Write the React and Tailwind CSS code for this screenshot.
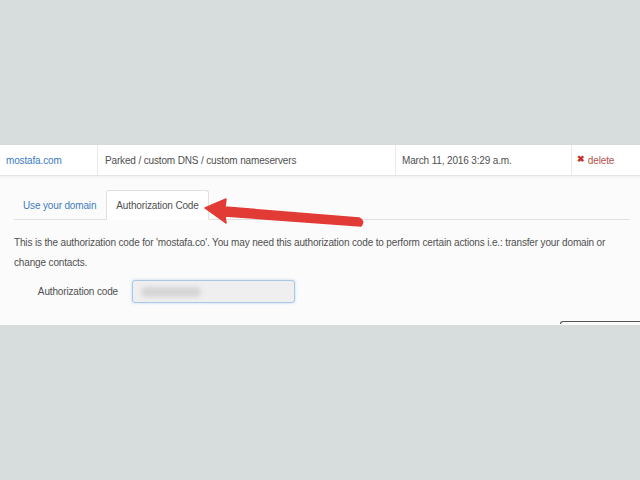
export default function App() {
    return (
        <div className="w-[640px] h-[480px] bg-[#d7dddd] relative overflow-hidden tracking-[-0.15px]" style={{ fontFamily: '"Liberation Sans", Arial, sans-serif' }}>
            <div className="h-[145px]" />

            {/* Domain panel */}
            <div className="h-[180px] bg-[#fbfbfb] relative">
                {/* Domain row */}
                <div className="h-[31px] flex bg-white border-b border-[#e4e6e6] shadow-[0_1px_3px_rgba(0,0,0,0.06)] text-[10px] text-[#505050]">
                    <div className="w-[98px] flex items-center pl-[6px] text-[#3c7bbf] border-r border-[#e8eaea]">mostafa.com</div>
                    <div className="w-[298px] flex items-center pl-[7px] border-r border-[#e8eaea]">Parked / custom DNS / custom nameservers</div>
                    <div className="w-[176px] flex items-center pl-[6px] border-r border-[#e8eaea]">March 11, 2016 3:29 a.m.</div>
                    <div className="flex-1 flex items-center pl-[5px] text-[#b4524c]">
                        <span className="text-[#c8302a] font-bold text-[9px] mr-[3px]">✖</span>delete
                    </div>
                </div>

                {/* Tabs */}
                <div className="mt-[15px] ml-[14px] mr-[10px] h-[29px] flex items-end border-b border-[#dfe1e1] text-[10px]">
                    <div className="h-full flex items-center pl-[9px] pr-[10px] text-[#3c7bbf]">Use your domain</div>
                    <div className="h-[30px] -mb-px flex items-center px-[9px] bg-white border border-[#dfe1e1] border-b-white rounded-t-[3px] text-[#505050]">Authorization Code</div>
                </div>

                {/* Description */}
                <p className="mt-[13px] ml-[14px] mr-[20px] text-[10px] leading-[20px] text-[#505050]">
                    This is the authorization code for 'mostafa.co'. You may need this authorization code to perform certain actions i.e.: transfer your domain or change contacts.
                </p>

                {/* Form row */}
                <div className="mt-[7px] flex items-center">
                    <label className="w-[118px] text-right text-[10px] text-[#505050]">Authorization code</label>
                    <div className="ml-[14px] w-[163px] h-[23px] rounded-[3px] border border-[#a9c8e6] bg-[#efefef] shadow-[0_0_3px_rgba(102,160,220,0.4)] flex items-center pl-[8px]">
                        <div className="w-[60px] h-[10px] rounded-full bg-[#d6d6d6] blur-[2px]" />
                    </div>
                </div>

                {/* corner of a button peeking at bottom right */}
                <div className="absolute right-0 bottom-[1px] w-[80px] h-[3px] border-t border-l border-[#555] rounded-tl-[3px]" />
            </div>

            {/* Red annotation arrow */}
            <svg className="absolute left-0 top-0" width="640" height="480" viewBox="0 0 640 480">
                <path d="M205 208 L226 199 L225 207 L359 218 Q365 221 361 226 L225 216 L226 223 Z" fill="#e23b35" stroke="#e23b35" strokeWidth="1.5" strokeLinejoin="round" />
            </svg>
        </div>
    );
}
